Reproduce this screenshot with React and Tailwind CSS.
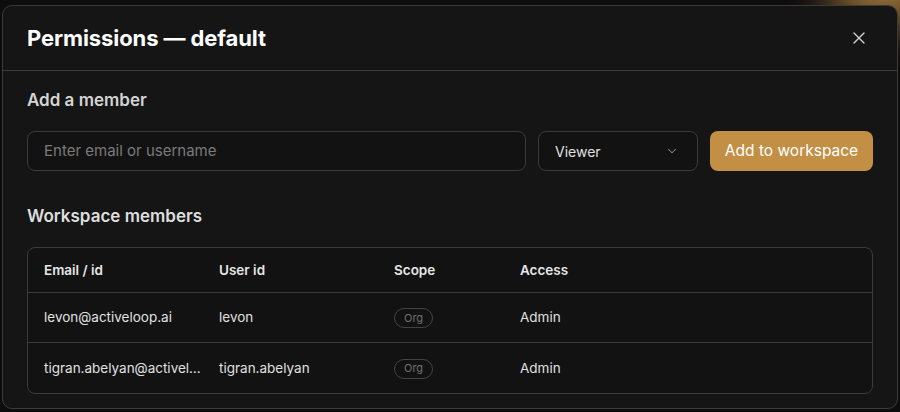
import { X, ChevronDown } from "lucide-react";

const members = [
  { email: "levon@activeloop.ai", user: "levon", scope: "Org", access: "Admin" },
  { email: "tigran.abelyan@activeloop.ai", user: "tigran.abelyan", scope: "Org", access: "Admin" },
];

export default function App() {
  return (
    <div
      className="relative w-[900px] h-[412px] overflow-hidden bg-[#0d0d0d] text-[#e6e6e6]"
      style={{ fontFamily: "Inter, 'Noto Sans', sans-serif" }}
    >
      {/* warm glow behind the dialog corner */}
      <div className="absolute -top-[40px] right-[-40px] w-[110px] h-[60px] rounded-full bg-[#c38f45] opacity-90 blur-xl"></div>

      <div className="relative ml-[2px] mt-[5px] w-[896px] h-[404px] rounded-[10px] border border-[#3b3b3b] bg-[#151515] flex flex-col">
        {/* header */}
        <div className="h-[65px] shrink-0 flex items-center justify-between pl-6 pr-[28px] border-b border-[#3b3b3b]">
          <h2 className="text-[22px] font-bold text-white tracking-[-0.1px]">Permissions — default</h2>
          <X size={20} strokeWidth={1.6} className="text-[#d0d0d0]" />
        </div>

        {/* body */}
        <div className="flex-1 px-6 pt-[17px]">
          <h3 className="text-[17px] leading-6 font-semibold text-[#d4d4d4]">Add a member</h3>

          <div className="mt-[19px] flex gap-3">
            <div className="flex-1 h-10 rounded-lg border border-[#3b3b3b] bg-[#121212] flex items-center px-4">
              <span className="text-[15px] text-[#7a7a7a]">Enter email or username</span>
            </div>
            <div className="w-[160px] h-10 rounded-lg border border-[#3b3b3b] bg-[#121212] flex items-center justify-between pl-4 pr-[18px]">
              <span className="text-[14px] text-[#e0e0e0]">Viewer</span>
              <ChevronDown size={14} strokeWidth={1.75} className="text-[#8a8a8a]" />
            </div>
            <button className="w-[163px] h-10 rounded-lg bg-[#c38f45] text-white text-[15.5px] font-normal">
              Add to workspace
            </button>
          </div>

          <h3 className="mt-[33px] text-[17px] leading-6 font-semibold text-[#dedede]">Workspace members</h3>

          <div className="mt-[19px] rounded-lg border border-[#3b3b3b] bg-[#121212] overflow-hidden">
            <div className="h-[45px] flex items-center border-b border-[#3b3b3b] text-[13.5px] font-semibold text-[#e6e6e6]">
              <div className="w-[175px] pl-4">Email / id</div>
              <div className="w-[175px] pl-4">User id</div>
              <div className="w-[126px] pl-4">Scope</div>
              <div className="flex-1 pl-4">Access</div>
            </div>
            {members.map((m, i) => (
              <div
                key={m.user}
                className={`h-[50px] flex items-center text-[13.5px] text-[#e0e0e0] ${i < members.length - 1 ? "border-b border-[#3b3b3b]" : ""}`}
              >
                <div className="w-[175px] pl-4 truncate">{m.email}</div>
                <div className="w-[175px] pl-4 truncate">{m.user}</div>
                <div className="w-[126px] pl-4">
                  <span className="inline-flex items-center h-[20px] px-[9px] rounded-full border border-[#444] text-[11px] text-[#6f6f6f]">
                    {m.scope}
                  </span>
                </div>
                <div className="flex-1 pl-4">{m.access}</div>
              </div>
            ))}
          </div>
        </div>
      </div>
    </div>
  );
}
